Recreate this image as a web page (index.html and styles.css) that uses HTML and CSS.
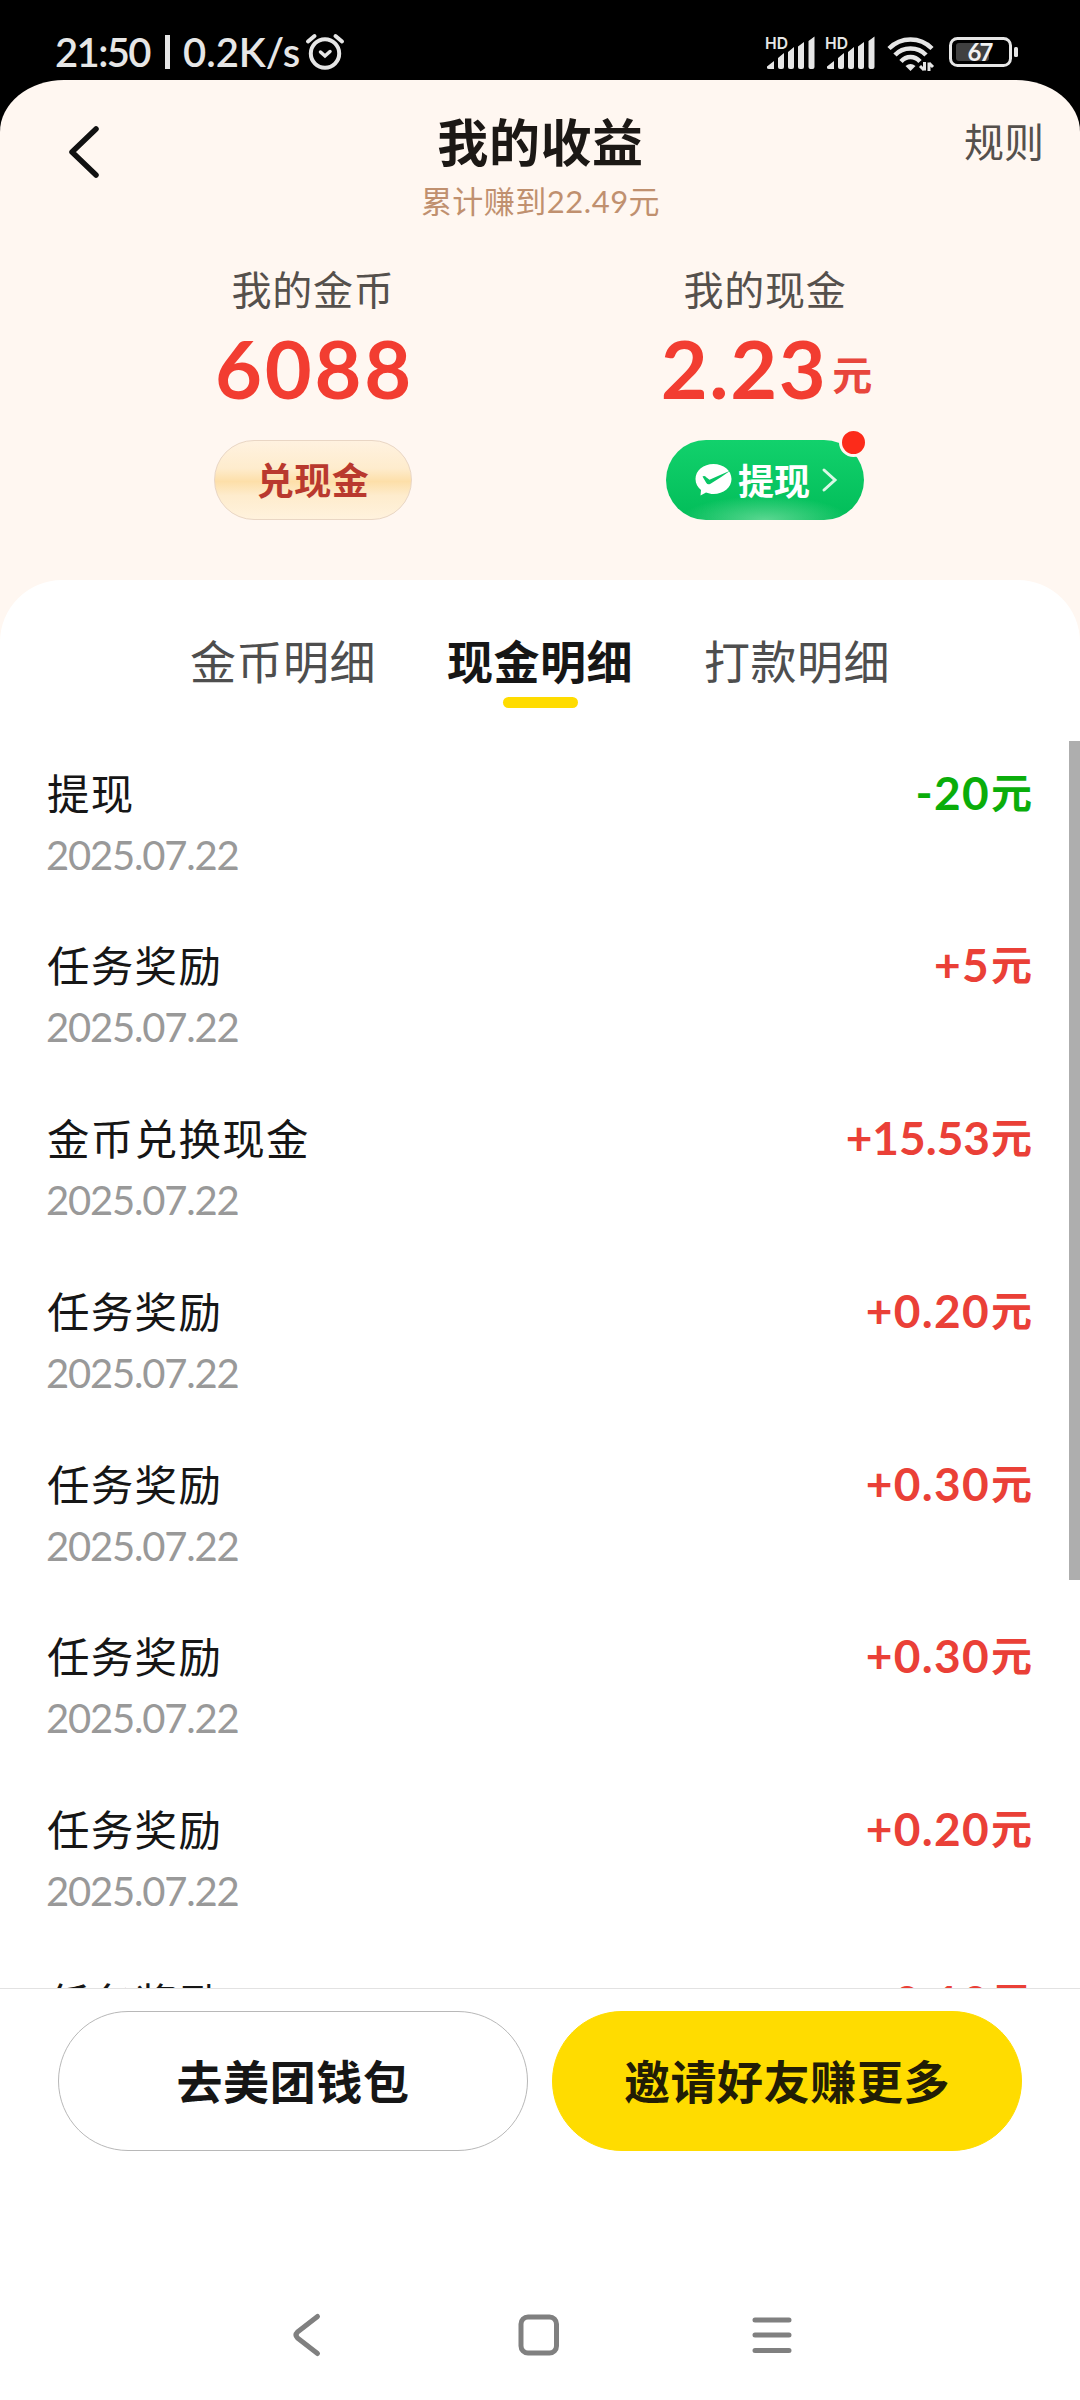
FILE: index.html
```html
<!DOCTYPE html>
<html lang="zh-CN">
<head>
<meta charset="utf-8">
<title>我的收益</title>
<link rel="stylesheet" href="styles.css">
</head>
<body>
<div class="status">
  <div class="status-left">
    <span class="clock">21:50</span><span class="bar"></span><span class="speed">0.2K/s</span>
    <svg class="alarm" width="40" height="38" viewBox="0 0 40 38" fill="none" stroke="#e6e6e6" stroke-width="4" stroke-linecap="round"><circle cx="20" cy="20.500" r="14.200"/><path d="M3 8.500 9.500 3M37 8.500 30.500 3"/><path d="M15.500 19l4.500 4 5-4.500" stroke-width="3.500"/></svg>
  </div>
  <div class="status-right">
    <svg width="50" height="36" viewBox="0 0 50 36" fill="#e6e6e6"><text class="hd" x="0" y="12.500" textLength="23" lengthAdjust="spacingAndGlyphs">HD</text><path d="M2 30.500l7-5.500v8H4q-2 0-2-1zM13 22l6-5v14q0 2-2 2h-2q-2 0-2-2zM23 16l6-5v20q0 2-2 2h-2q-2 0-2-2zM33 10.500l6-4.500v25q0 2-2 2h-2q-2 0-2-2zM43.500 5l6-4.500v30.500q0 2-2 2h-2q-2 0-2-2z"/></svg>
    <svg width="50" height="36" viewBox="0 0 50 36" fill="#e6e6e6"><text class="hd" x="0" y="12.500" textLength="23" lengthAdjust="spacingAndGlyphs">HD</text><path d="M2 30.500l7-5.500v8H4q-2 0-2-1zM13 22l6-5v14q0 2-2 2h-2q-2 0-2-2zM23 16l6-5v20q0 2-2 2h-2q-2 0-2-2zM33 10.500l6-4.500v25q0 2-2 2h-2q-2 0-2-2zM43.500 5l6-4.500v30.500q0 2-2 2h-2q-2 0-2-2z"/></svg>
    <svg class="wifi" width="48" height="36" viewBox="0 0 48 36" fill="none" stroke="#e6e6e6" stroke-width="4.500"><path d="M2 12.500Q11 3.500 23.500 3.500T45 12.500"/><path d="M8 19Q14 12.500 23.500 12.500T39 19"/><path d="M14 25.500Q18 21 23.500 21T33 25.500"/><path d="M18.500 30q5-4 10 0l-5 5z" fill="#e6e6e6" stroke="none"/><path d="M37.500 26v8.500M33 30l4 4M42 35v-8.500M46 31l-4-4" stroke-width="3"/></svg>
    <svg class="battery" width="70" height="32" viewBox="0 0 70 32"><rect x="1.500" y="1.500" width="60" height="27" rx="7" fill="none" stroke="#e6e6e6" stroke-width="3"/><rect x="7" y="6" width="33" height="18" rx="3" fill="#404040"/><rect x="65" y="10" width="4" height="10" rx="1.500" fill="#e6e6e6"/><text class="level" x="30.500" y="24" text-anchor="middle">67</text></svg>
  </div>
</div>

<main class="app">
  <header class="header">
    <svg class="back" width="34" height="54" viewBox="0 0 34 54" fill="none" stroke="#111" stroke-width="5.500" stroke-linecap="round" stroke-linejoin="round"><path d="M29 4 5 27l24 23"/></svg>
    <div class="heading">
      <h1 class="title">我的收益</h1>
      <p class="subtitle">累计赚到22.49元</p>
    </div>
    <a class="rules">规则</a>
  </header>

  <section class="stats">
    <div class="stat">
      <p class="label">我的金币</p>
      <p class="value">6088</p>
      <button class="pill gold">兑现金</button>
    </div>
    <div class="stat">
      <p class="label">我的现金</p>
      <p class="value decimal">2.23<span class="unit">元</span></p>
      <button class="pill green">
        <svg width="37" height="34" viewBox="0 0 37 34"><path d="M18.500 1C8.500 1 .5 7.500.5 16c0 4.500 2.200 8.200 5.500 11l-.5 5.500 5.500-3c2.300.9 4.800 1.500 7.500 1.500 10 0 18-6.500 18-15S28.500 1 18.500 1z" fill="#fff"/><path d="M7.500 13.500q2-1.200 4 1l3 2.300Q24 12.500 35.500 7.500 26 14.500 15.500 20.800q-2.800 1.500-4.300-1z" fill="#08c665"/></svg>
        <span>提现</span>
        <svg class="go" width="18" height="26" viewBox="0 0 18 26" fill="none" stroke="#d9f8e6" stroke-width="3" stroke-linecap="round"><path d="M3 3l11 10L3 23"/></svg>
        <i class="dot"></i>
      </button>
    </div>
  </section>

  <section class="panel">
    <nav class="tabs">
      <a class="tab">金币明细</a>
      <a class="tab active">现金明细</a>
      <a class="tab">打款明细</a>
    </nav>
    <div class="list">
      <ul class="rows">
        <li class="row"><div><p class="name">提现</p><p class="date">2025.07.22</p></div><b class="amount out">-20<span>元</span></b></li>
        <li class="row"><div><p class="name">任务奖励</p><p class="date">2025.07.22</p></div><b class="amount">+5<span>元</span></b></li>
        <li class="row"><div><p class="name">金币兑换现金</p><p class="date">2025.07.22</p></div><b class="amount long">+15.53<span>元</span></b></li>
        <li class="row"><div><p class="name">任务奖励</p><p class="date">2025.07.22</p></div><b class="amount">+0.20<span>元</span></b></li>
        <li class="row"><div><p class="name">任务奖励</p><p class="date">2025.07.22</p></div><b class="amount">+0.30<span>元</span></b></li>
        <li class="row"><div><p class="name">任务奖励</p><p class="date">2025.07.22</p></div><b class="amount">+0.30<span>元</span></b></li>
        <li class="row"><div><p class="name">任务奖励</p><p class="date">2025.07.22</p></div><b class="amount">+0.20<span>元</span></b></li>
        <li class="row"><div><p class="name">任务奖励</p></div><b class="amount">+0.10<span>元</span></b></li>
      </ul>
      <div class="scrollbar"></div>
    </div>
  </section>

  <footer class="actions">
    <button class="action">去美团钱包</button>
    <button class="action primary">邀请好友赚更多</button>
  </footer>
</main>

<nav class="sysnav">
  <svg width="42" height="50" viewBox="0 0 42 50"><path d="M32.500 6.500 12.500 22q-3 3 0 6l20 15.500"/></svg>
  <svg width="50" height="50" viewBox="0 0 50 50"><rect x="7" y="7" width="35.500" height="36" rx="7"/></svg>
  <svg width="50" height="50" viewBox="0 0 50 50"><path d="M8 10h34M8 25h34M8 40.500h34"/></svg>
</nav>
</body>
</html>
```
FILE: styles.css
```css
* { box-sizing: border-box; margin: 0; padding: 0; }
body {
  width: 1080px;
  height: 2400px;
  background: #000;
  font-family: "Noto Sans CJK SC", sans-serif;
  display: flex;
  flex-direction: column;
  overflow: hidden;
}
button { border: 0; background: none; font-family: inherit; }
svg { flex: none; display: block; overflow: visible; }

.status {
  height: 80px;
  flex: none;
  display: flex;
  justify-content: space-between;
  color: #e6e6e6;
  padding: 33px 61px 0 55px;
}
.status-left { display: flex; height: 38px; align-items: center; font: 600 40px/38px Lato, sans-serif; }
.clock { letter-spacing: -1.6px; }
.bar { width: 5px; height: 34px; background: #e6e6e6; margin: 0 13px 0 15px; }
.alarm { margin-left: 5px; }
.status-right { display: flex; padding-top: 3px; }
.status-right svg + svg { margin-left: 10px; }
.status-right .wifi { margin-left: 12px; }
.status-right .battery { margin-left: 14px; margin-top: 1px; }
.hd { font: 600 16.5px Inter, sans-serif; }
.level { font: 700 24px Lato, sans-serif; fill: #f2f2f2; letter-spacing: -1.8px; }

.app {
  flex: 1;
  display: flex;
  flex-direction: column;
  background: #fff7f1;
  border-radius: 64px 64px 0 0 / 52px 52px 0 0;
  overflow: hidden;
}
.header {
  height: 183px;
  padding: 30px 36px 0 67px;
  display: grid;
  grid-template-columns: 200px 1fr 200px;
  align-items: start;
}
.back { margin-top: 15px; }
.heading { text-align: center; margin: 0 -1px 0 -31px; }
.title { font-size: 51px; line-height: 60px; font-weight: 700; color: #1c1815; letter-spacing: 0.6px; }
.subtitle { margin-top: 11px; font: 400 31px/40px Lato, "Noto Sans CJK SC", sans-serif; color: #c0906f; letter-spacing: 0.5px; }
.rules { font-size: 40px; line-height: 60px; color: #55504c; text-align: right; }

.stats { height: 317px; flex: none; display: flex; justify-content: center; gap: 252px; padding-right: 2px; }
.stat { width: 200px; display: flex; flex-direction: column; align-items: center; white-space: nowrap; }
.label { font-size: 40px; line-height: 50px; color: #55504c; letter-spacing: 0.8px; }
.value { height: 80px; margin-top: 15px; padding-left: 3px; font: 700 81px/80px Lato, sans-serif; color: #f23d31; letter-spacing: 2.8px; }
.decimal { letter-spacing: 1.6px; }
.unit { position: relative; top: -9px; font: 700 40px/40px "Noto Sans CJK SC", sans-serif; color: #e8463c; letter-spacing: 0; margin-left: 5px; }
.pill { position: relative; width: 198px; height: 80px; margin-top: 32px; border-radius: 40px; font-size: 37px; font-weight: 700; display: flex; align-items: center; justify-content: center; }
.gold { padding-bottom: 3px; border: 1px solid #e9d6c4; color: #b9392e; background: linear-gradient(#fff2e0, #feeccd 35%, #fddfa9 52%, #feeccd 70%, #fff2dd); letter-spacing: 0.5px; }
.green { color: #fff; font-size: 36px; background: radial-gradient(ellipse 85px 24px at 50% 100%, #5bd791, transparent), linear-gradient(#12d16c, #02bd59); }
.green span { margin: 0 0 3px 6px; }
.green svg:first-child { margin-left: 4px; }
.go { margin-left: 11px; }
.dot { position: absolute; right: -4px; top: -12px; width: 29px; height: 29px; border: 3px solid #fff7f1; border-radius: 50%; background: #fc2b1a; }

.panel { flex: none; height: 1408px; background: #fff; border-radius: 62px 62px 0 0; display: flex; flex-direction: column; }
.tabs { height: 161px; flex: none; padding: 49px 0 0; display: flex; justify-content: center; gap: 71px; }
.tab { font-size: 46px; line-height: 60px; color: #4e4e4e; letter-spacing: 0.5px; display: flex; flex-direction: column; align-items: center; }
.active { font-weight: 700; color: #161616; }
.active::after { content: ""; width: 75px; height: 11px; border-radius: 6px; margin-top: 8px; background: #ffdc00; }

.list { flex: 1; min-height: 0; display: flex; overflow: hidden; }
.rows { flex: 1; list-style: none; padding: 0 37px 0 47px; }
.row { height: 172.800px; padding-top: 25.500px; display: flex; justify-content: space-between; align-items: flex-start; }
.name { font-size: 42.500px; line-height: 50px; color: #161616; letter-spacing: 1.3px; }
.date { margin: 18px 0 0 -1px; font: 400 40px/40px Lato, sans-serif; color: #999; letter-spacing: -1.2px; }
.amount { font: 700 46px/50px Lato, sans-serif; color: #ea4037; letter-spacing: 1.3px; }
.long { letter-spacing: 0; }
.amount span { position: relative; top: -2px; font: 700 41px/50px "Noto Sans CJK SC", sans-serif; margin-left: 1px; letter-spacing: 0; }
.out { color: #0aad0a; }
.scrollbar { width: 11px; height: 839px; background: #aeaeae; }

.actions { flex: 1; background: #fff; border-top: 1px solid #e2e2e2; padding: 22px 58px 0; display: flex; gap: 24px; align-items: flex-start; }
.action { flex: 1; height: 140px; padding-bottom: 5px; border-radius: 70px; border: 1px solid #b8b8b8; font-size: 46px; font-weight: 700; color: #161616; letter-spacing: 0.6px; }
.primary { background: #ffdc00; border-color: #ffdc00; color: #221d05; }

.sysnav { height: 90px; flex: none; background: #fff; display: flex; padding: 0 0 0 285px; }
.sysnav svg { fill: none; stroke: #808080; stroke-width: 5; stroke-linecap: round; stroke-linejoin: round; }
.sysnav svg:nth-child(2) { margin-left: 187px; }
.sysnav svg:nth-child(3) { margin-left: 183px; }
```
